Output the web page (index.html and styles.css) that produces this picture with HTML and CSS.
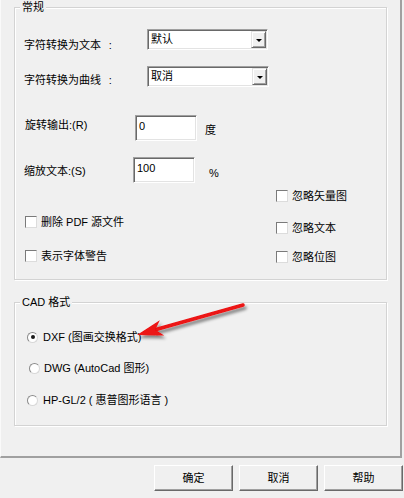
FILE: index.html
```html
<!DOCTYPE html>
<html lang="zh-CN">
<head>
<meta charset="utf-8">
<title>选项</title>
<link rel="stylesheet" href="styles.css">
</head>
<body>
<div class="dialog">
  <div class="panel">
    <section class="group group-general">
      <span class="group-title">常规</span>
      <div class="row row-1">
        <span class="label lb-1">字符转换为文本&ensp;&thinsp;:</span>
        <div class="combo combo-1"><span class="combo-text">默认</span><span class="combo-btn"><i class="tri"></i></span></div>
      </div>
      <div class="row row-2">
        <span class="label lb-2">字符转换为曲线&ensp;&thinsp;:</span>
        <div class="combo combo-2"><span class="combo-text">取消</span><span class="combo-btn"><i class="tri"></i></span></div>
      </div>
      <div class="row row-3">
        <span class="label lb-3">旋转输出:(R)</span>
        <div class="field">0</div>
        <span class="unit unit-deg">度</span>
      </div>
      <div class="row row-4">
        <span class="label lb-4">缩放文本:(S)</span>
        <div class="field">100</div>
        <span class="unit unit-pct">%</span>
      </div>
      <div class="opts">
        <div class="col col-left">
          <div class="check ck-l1"><span class="box"></span><span>删除 PDF 源文件</span></div>
          <div class="check ck-l2"><span class="box"></span><span>表示字体警告</span></div>
        </div>
        <div class="col col-right">
          <div class="check ck-r1"><span class="box"></span><span>忽略矢量图</span></div>
          <div class="check ck-r2"><span class="box"></span><span>忽略文本</span></div>
          <div class="check ck-r3"><span class="box"></span><span>忽略位图</span></div>
        </div>
      </div>
    </section>
    <section class="group group-cad">
      <span class="group-title">CAD 格式</span>
      <div class="radio rd-1"><span class="circle checked"></span><span>DXF (图画交换格式)</span></div>
      <div class="radio rd-2"><span class="circle"></span><span>DWG (AutoCad 图形)</span></div>
      <div class="radio rd-3"><span class="circle"></span><span>HP-GL/2 ( 惠普图形语言 )</span></div>
    </section>
  </div>
  <div class="buttons">
    <div class="btn">确定</div>
    <div class="btn">取消</div>
    <div class="btn">帮助</div>
  </div>
  <svg class="arrow" width="404" height="498" viewBox="0 0 404 498">
    <defs>
      <filter id="sh" x="-20%" y="-50%" width="140%" height="200%">
        <feDropShadow dx="2" dy="3" stdDeviation="1.6" flood-color="#000" flood-opacity="0.45"/>
      </filter>
    </defs>
    <g filter="url(#sh)">
      <line x1="243" y1="305" x2="156" y2="329.5" stroke="#ec1212" stroke-width="3.5" stroke-linecap="round"/>
      <polygon points="137,335 159.8,320.2 155.3,329.8 164.2,335.6" fill="#ec1212"/>
    </g>
  </svg>
</div>
</body>
</html>
```
FILE: styles.css
```css
body {
  margin: 0;
  background: #f0f0f0;
  font: 11px/14px "Liberation Sans", "Noto Sans CJK SC", sans-serif;
  color: #000;
}

.dialog {
  position: relative;
  width: 404px;
  height: 498px;
  overflow: hidden;
}

.panel {
  box-sizing: border-box;
  width: 402px;
  height: 458px;
  border-left: 1px solid #fafafa;
  border-right: 2px solid #a0a0a0;
  border-bottom: 2px solid #a0a0a0;
  padding: 7px 0 0 13px;
}

.group {
  position: relative;
  box-sizing: border-box;
  width: 373px;
  border: 1px solid #d3d3d3;
  box-shadow: 1px 1px 0 #fff, inset 1px 1px 0 #fff;
}

.group-general { height: 273px; }
.group-cad { height: 124px; margin-top: 22px; }

.group-title {
  position: absolute;
  top: -8px;
  left: 5px;
  padding: 0 2px;
  background: #f0f0f0;
  white-space: nowrap;
}

.row {
  display: flex;
  align-items: flex-start;
}

.row-1 { margin-top: 21px; height: 21px; }
.row-2 { margin-top: 16px; height: 21px; }
.row-3 { margin-top: 28px; height: 26px; }
.row-4 { margin-top: 16px; height: 26px; }

.label { white-space: nowrap; }
.lb-1 { margin: 9px 0 0 9px; width: 123px; }
.lb-2 { margin: 7px 0 0 9px; width: 123px; }
.lb-3 { margin: 3px 0 0 10px; width: 110px; }
.lb-4 { margin: 7px 0 0 9px; width: 109px; }

.combo {
  box-sizing: border-box;
  display: flex;
  height: 21px;
  background: #fff;
  border: 1px solid;
  border-color: #a0a0a0 #fff #fff #a0a0a0;
  box-shadow: inset 1px 1px 0 #696969, inset -1px -1px 0 #e3e3e3;
  padding: 1px;
}
.combo-1 { width: 121px; }
.combo-2 { width: 122px; }

.combo-text {
  flex: 1;
  padding-left: 2px;
  line-height: 16px;
  white-space: nowrap;
}

.combo-btn {
  box-sizing: border-box;
  width: 15px;
  display: flex;
  align-items: center;
  justify-content: center;
  background: #f0f0f0;
  border: 1px solid;
  border-color: #e3e3e3 #696969 #696969 #e3e3e3;
  box-shadow: inset 1px 1px 0 #fff, inset -1px -1px 0 #a0a0a0;
}

.tri {
  width: 0;
  height: 0;
  border-left: 3px solid transparent;
  border-right: 3px solid transparent;
  border-top: 3px solid #000;
  margin-top: 1px;
}

.field {
  box-sizing: border-box;
  width: 62px;
  height: 26px;
  background: #fff;
  border: 1px solid;
  border-color: #a0a0a0 #fff #fff #a0a0a0;
  box-shadow: inset 1px 1px 0 #696969, inset -1px -1px 0 #e3e3e3;
  padding: 3px 0 0 3px;
}

.unit-deg { margin: 8px 0 0 8px; }
.unit-pct { margin: 9px 0 0 14px; }

.opts { display: flex; }
.col { display: flex; flex-direction: column; }
.col-left { margin-left: 10px; width: 251px; }

.check {
  display: flex;
  align-items: center;
  gap: 4px;
  height: 14px;
  white-space: nowrap;
}
.ck-l1 { margin-top: 32px; }
.ck-l2 { margin-top: 20px; }
.ck-r1 { margin-top: 6px; }
.ck-r2 { margin-top: 18px; }
.ck-r3 { margin-top: 15px; }

.box {
  box-sizing: border-box;
  width: 12px;
  height: 12px;
  background: #fff;
  border: 1px solid;
  border-color: #7a7a7a #dcdcdc #dcdcdc #7a7a7a;
}

.radio {
  display: flex;
  align-items: center;
  gap: 5px;
  height: 14px;
  margin-left: 12px;
  white-space: nowrap;
}
.rd-1 { margin-top: 27px; }
.rd-2 { margin-top: 17px; margin-left: 14px; gap: 4px; }
.rd-3 { margin-top: 18px; }

.circle {
  box-sizing: border-box;
  width: 11px;
  height: 11px;
  border-radius: 50%;
  background: #fff;
  border: 1px solid;
  border-color: #8a8a8a #d8d8d8 #d8d8d8 #8a8a8a;
  display: flex;
  align-items: center;
  justify-content: center;
}
.circle.checked::after {
  content: "";
  width: 4px;
  height: 4px;
  border-radius: 50%;
  background: #1a1a1a;
}

.buttons {
  display: flex;
  justify-content: flex-end;
  gap: 6px;
  padding: 7px 1px 0 0;
}

.btn {
  box-sizing: border-box;
  width: 79px;
  height: 26px;
  display: flex;
  align-items: center;
  justify-content: center;
  background: #f0f0f0;
  border: 1px solid;
  border-color: #fff #696969 #696969 #fff;
  box-shadow: inset -1px -1px 0 #a0a0a0;
}

.arrow {
  position: absolute;
  top: 0;
  left: 0;
  pointer-events: none;
}
```
